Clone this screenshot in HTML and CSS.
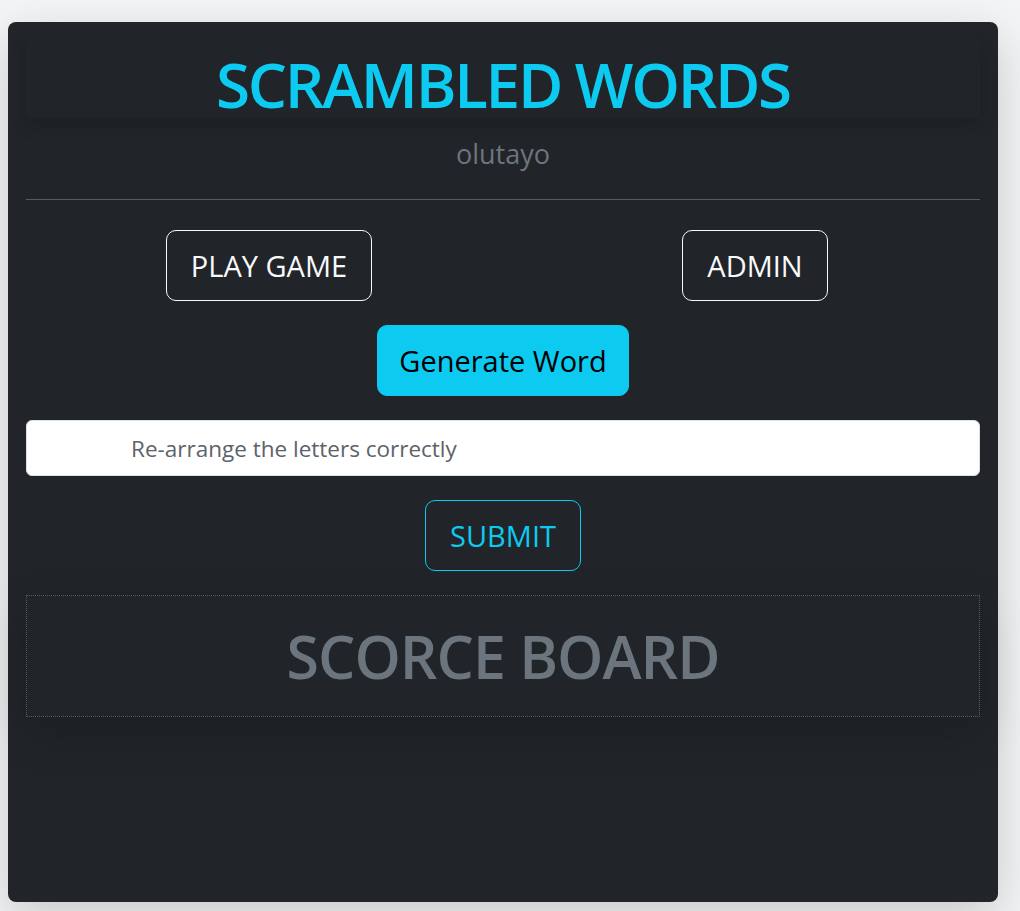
FILE: index.html
```html
<!DOCTYPE html>
<html lang="en">
<head>
<meta charset="utf-8">
<title>Scrambled Words</title>
<link rel="stylesheet" href="styles.css">
</head>
<body>
  <main class="card">
    <header class="head">
      <h1 class="title">SCRAMBLED WORDS</h1>
    </header>
    <p class="user">olutayo</p>
    <hr class="rule">
    <div class="nav-row">
      <div class="nav-col"><button class="btn btn-light-outline">PLAY GAME</button></div>
      <div class="nav-col"><button class="btn btn-light-outline">ADMIN</button></div>
    </div>
    <div class="center">
      <button class="btn btn-info">Generate Word</button>
    </div>
    <input class="answer" type="text" placeholder="Re-arrange the letters correctly">
    <div class="center">
      <button class="btn btn-info-outline">SUBMIT</button>
    </div>
    <section class="board">
      <h2 class="board-title">SCORCE BOARD</h2>
    </section>
  </main>
</body>
</html>
```
FILE: styles.css
```css
* { box-sizing: border-box; }

html, body {
  margin: 0;
  padding: 0;
}

body {
  background: #f3f4f6;
  font-family: "Open Sans", "Noto Sans", sans-serif;
  padding: 22px 22px 9px 8px;
}

.card {
  width: 990px;
  height: 880px;
  background: #212529;
  border-radius: 8px;
  box-shadow: 0 1rem 3rem rgba(0, 0, 0, 0.175);
  padding: 16px 18px 0;
  display: flex;
  flex-direction: column;
}

.head {
  box-shadow: 0 0.5rem 1rem rgba(0, 0, 0, 0.15);
  padding: 12px 0 0;
}

.title {
  margin: 0;
  text-align: center;
  color: #0dcaf0;
  font-size: 62px;
  font-weight: 600;
  line-height: 1.1;
  letter-spacing: -2.3px;
}

.user {
  margin: 18px 0 0;
  text-align: center;
  color: #6c757d;
  font-size: 27px;
  line-height: 36px;
}

.rule {
  margin: 27px 0 0;
  border: 0;
  border-top: 1px solid rgba(255, 255, 255, 0.25);
}

.nav-row {
  margin: 30px -18px 0 0;
  display: grid;
  grid-template-columns: 1fr 1fr;
}

.nav-col {
  display: flex;
  justify-content: center;
}

.btn {
  font-family: inherit;
  font-size: 29px;
  line-height: 45px;
  padding: 12px 24px;
  border-radius: 10px;
  border: 1px solid transparent;
  background: transparent;
  cursor: pointer;
}

.btn-light-outline {
  color: #f8f9fa;
  border-color: #f8f9fa;
}

.btn-info {
  color: #000;
  background: #0dcaf0;
  border-color: #0dcaf0;
  padding: 12px 21px;
}

.btn-info-outline {
  color: #0dcaf0;
  border-color: #0dcaf0;
}

.center {
  display: flex;
  justify-content: center;
  margin-top: 24px;
}

.answer {
  margin-top: 24px;
  width: 100%;
  height: 56px;
  border: 1px solid #dee2e6;
  border-radius: 6px;
  background: #fff;
  padding: 0 12px 0 104px;
  font-family: inherit;
  font-size: 22.5px;
  color: #212529;
}

.answer::placeholder {
  color: #5c636a;
  opacity: 1;
}

.board {
  margin-top: 24px;
  height: 122px;
  border: 1px dotted #55595e;
  box-shadow: 0 1rem 3rem rgba(0, 0, 0, 0.175);
  display: flex;
  align-items: center;
  justify-content: center;
}

.board-title {
  margin: 0;
  color: #6c757d;
  font-size: 59px;
  font-weight: 600;
  line-height: 1.2;
  letter-spacing: -1px;
}
```
